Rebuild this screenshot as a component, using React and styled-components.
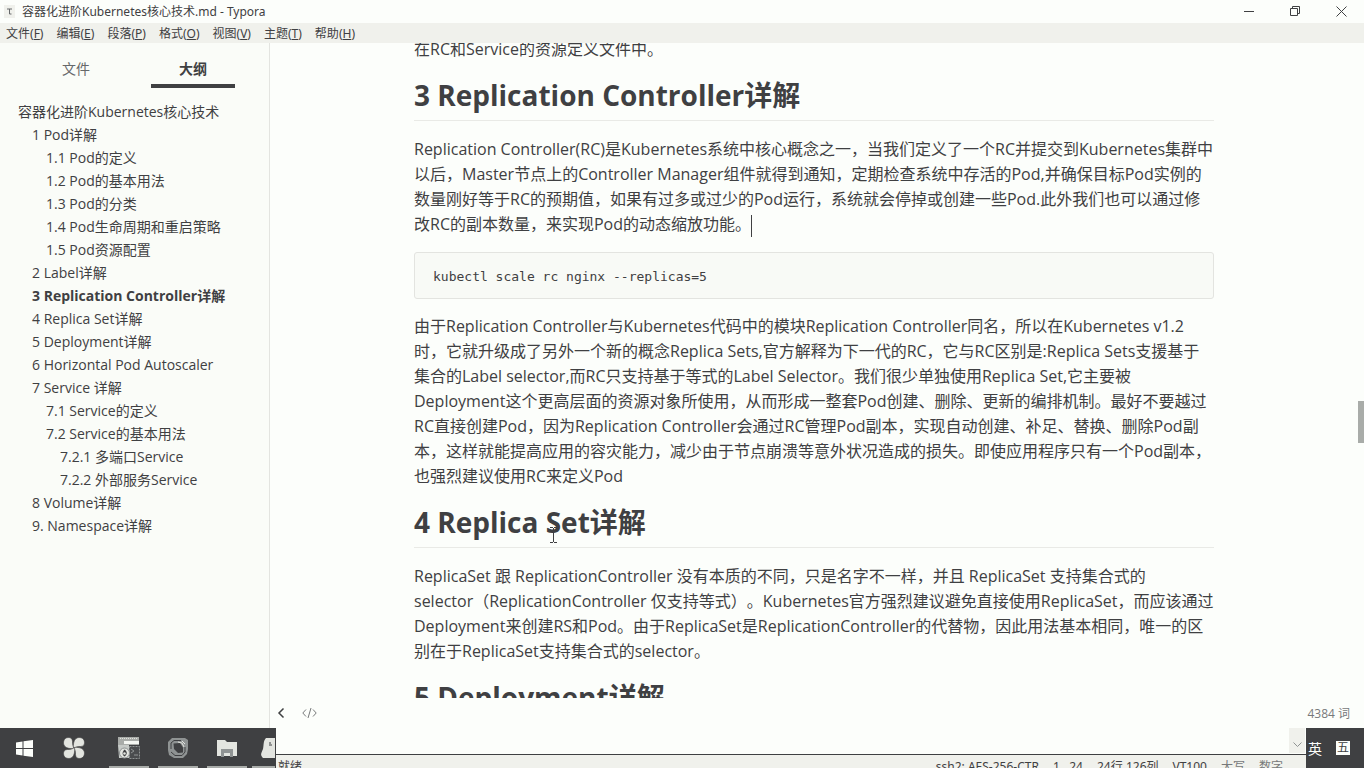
import React from 'react';
import styled, { createGlobalStyle } from 'styled-components';

const ink = '#3f4042';
const paper = '#fcfefb';
const haze = '#f0f1ec';
const uiFont = '"Noto Sans", "Noto Sans CJK SC", sans-serif';

const Global = createGlobalStyle`
  * { box-sizing: border-box; }
  body {
    margin: 0;
    background: ${paper};
    color: ${ink};
    font-family: "Open Sans", "Noto Sans CJK SC", sans-serif;
    text-spacing-trim: space-all;
  }
  button { font: inherit; color: inherit; background: none; border: 0; padding: 0; }
`;

const Desktop = styled.div`
  height: 100vh;
  display: flex;
  flex-direction: column;
  overflow: hidden;
`;

const TitleBar = styled.header`
  height: 23px;
  flex: none;
  display: flex;
  align-items: center;
  gap: 7px;
  padding-left: 4px;
  font-family: ${uiFont};
  font-size: 12px;
  line-height: 22px;
`;

const WindowControls = styled.div`
  margin-left: auto;
  display: flex;
`;

const WindowButton = styled.button`
  width: 46px;
  height: 22px;
  display: flex;
  align-items: center;
  justify-content: center;
`;

const MenuBar = styled.nav`
  height: 20px;
  flex: none;
  display: flex;
  gap: 13px;
  padding-left: 6px;
  background: ${haze};
  font-family: ${uiFont};
  font-size: 12px;
  line-height: 22px;
`;

const MenuItem = styled.button`
  white-space: nowrap;
`;

const Workspace = styled.div`
  flex: 1;
  min-height: 0;
  display: flex;
`;

const Sidebar = styled.aside`
  width: 270px;
  flex: none;
  background: #fafcf8;
  border-right: 1px solid #e3e4e0;
  font-size: 14px;
`;

const Tabs = styled.div`
  display: flex;
  gap: 33px;
  padding: 0 34px;
`;

const Tab = styled.button`
  width: 84px;
  height: 45px;
  padding-top: 10px;
  line-height: 31px;
  border-bottom: 4px solid ${p => (p.$active ? ink : 'transparent')};
  color: ${p => (p.$active ? ink : '#66686a')};
  font-weight: ${p => (p.$active ? 700 : 400)};
`;

const Outline = styled.ul`
  list-style: none;
  margin: 12px 0 0;
  padding: 0;
`;

const OutlineItem = styled.li`
  padding-left: ${p => 18 + p.$level * 14}px;
  line-height: 23px;
  white-space: nowrap;
  font-weight: ${p => (p.$current ? 700 : 400)};
`;

const OutlineLink = styled.a`
  display: block;
  height: 23px;
  color: inherit;
  text-decoration: none;
`;

const Main = styled.main`
  flex: 1;
  min-width: 0;
  display: flex;
  flex-direction: column;
`;

const Scroller = styled.div`
  flex: 1;
  min-height: 0;
  display: flex;
  overflow: hidden;
`;

const Page = styled.div`
  flex: 1;
  min-width: 0;
  height: 100%;
  overflow: hidden;
`;

const Article = styled.article`
  max-width: 800px;
  margin: -6px auto 0;
  font-size: 16px;
  line-height: 25px;
`;

const Paragraph = styled.p`
  margin: 0;
`;

const Unbroken = styled.span`
  white-space: nowrap;
`;

const Heading = styled.h2`
  margin: 16px 0;
  padding-bottom: 8px;
  border-bottom: 1px solid #e9eae6;
  font-size: 28px;
  font-weight: 700;
  line-height: 34px;
`;

const Caret = styled.span`
  display: inline-block;
  width: 1px;
  height: 22px;
  vertical-align: middle;
  background: ${ink};
`;

const CodeBlock = styled.pre`
  margin: 15px 0;
  padding: 12px 18px 10px;
  border: 1px solid #e3e4e0;
  border-radius: 3px;
  background: #f8faf6;
  font-family: "DejaVu Sans Mono", monospace;
  font-size: 13px;
  line-height: 23px;
`;

const ScrollTrack = styled.div`
  width: 6px;
  flex: none;
  padding-top: 358px;
`;

const ScrollThumb = styled.div`
  height: 42px;
  background: #a9aca9;
`;

const Footer = styled.footer`
  height: 30px;
  flex: none;
  display: flex;
  align-items: center;
  gap: 16px;
  padding: 0 14px 0 6px;
  font-size: 12px;
`;

const FooterButton = styled.button`
  display: flex;
`;

const WordCount = styled.span`
  margin-left: auto;
  color: #77797a;
`;

const BottomStrip = styled.div`
  height: 40px;
  flex: none;
  display: flex;
  background: ${ink};
`;

const Taskbar = styled.nav`
  width: 275px;
  flex: none;
  display: flex;
  overflow: hidden;
`;

const TaskButton = styled.button`
  width: 40px;
  height: 40px;
  flex: none;
  margin-left: ${p => p.$gap || 9}px;
  padding-top: 2px;
  display: flex;
  align-items: center;
  justify-content: center;
  border-bottom: 2px solid ${p => (p.$open ? '#a9aca9' : 'transparent')};
`;

const Terminal = styled.section`
  flex: 1;
  min-width: 0;
  display: flex;
  flex-direction: column;
  background: ${paper};
  border-left: 1px solid ${ink};
`;

const TerminalView = styled.div`
  height: 27px;
  flex: none;
  display: flex;
  justify-content: flex-end;
  padding-right: 1px;
  border-bottom: 1px solid ${ink};
`;

const TerminalScroll = styled.button`
  width: 16px;
  height: 25px;
  display: flex;
  align-items: flex-end;
  justify-content: center;
  padding-bottom: 5px;
  background: ${haze};
`;

const TerminalStatus = styled.div`
  height: 13px;
  display: flex;
  overflow: hidden;
  padding: 3px 23px 0 2px;
  background: ${haze};
  font-family: ${uiFont};
  font-size: 12px;
  line-height: 18px;
  white-space: pre;
`;

const StatusGroup = styled.div`
  margin-left: auto;
  display: flex;
  gap: 14px;
`;

const StatusMuted = styled.span`
  color: #77797a;
`;

const Tray = styled.div`
  width: 58px;
  flex: none;
  display: flex;
  align-items: center;
  gap: 14px;
  padding-left: 2px;
  color: ${paper};
  font-size: 14px;
`;

const ImeMode = styled.span`
  width: 14px;
  height: 14px;
  background: ${paper};
  color: ${ink};
  font-size: 12px;
  line-height: 14px;
  text-align: center;
`;

const Pointer = styled.svg`
  position: absolute;
  left: 135px;
  top: 24px;
`;

const Anchor = styled.span`
  position: relative;
`;

const menus = [['文件', 'F'], ['编辑', 'E'], ['段落', 'P'], ['格式', 'O'], ['视图', 'V'], ['主题', 'T'], ['帮助', 'H']];

const outline = [
  [0, '容器化进阶Kubernetes核心技术'],
  [1, '1 Pod详解'],
  [2, '1.1 Pod的定义'],
  [2, '1.2 Pod的基本用法'],
  [2, '1.3 Pod的分类'],
  [2, '1.4 Pod生命周期和重启策略'],
  [2, '1.5 Pod资源配置'],
  [1, '2 Label详解'],
  [1, '3 Replication Controller详解', true],
  [1, '4 Replica Set详解'],
  [1, '5 Deployment详解'],
  [1, '6 Horizontal Pod Autoscaler'],
  [1, '7 Service 详解'],
  [2, '7.1 Service的定义'],
  [2, '7.2 Service的基本用法'],
  [3, '7.2.1 多端口Service'],
  [3, '7.2.2 外部服务Service'],
  [1, '8 Volume详解'],
  [1, '9. Namespace详解'],
];

const WindowsLogo = () => (
  <svg width="17" height="17" viewBox="0 0 17 17" fill={paper}>
    <path d="M0 2.5 6.5 1.5V8H0zM7.5 1.3 17 0V8H7.500zM0 9H6.500V15.500L0 14.500zM7.500 9H17V17L7.500 15.700z" />
  </svg>
);

const petal = 'M11.500 11.500C8 12 3.500 11.500 1.500 9-.5 6 .5 1 5 .5c3-.3 4.500 1.500 4.500 4 0 2.500 0 4 2 7Z';

const PinwheelIcon = () => (
  <svg width="22" height="22" viewBox="0 0 22 22" fill="#e3e5e0">
    {[0, 90, 180, 270].map(turn => (
      <path key={turn} d={petal} transform={`rotate(${turn} 11 11)`} stroke={ink} strokeWidth=".6" />
    ))}
  </svg>
);

const TerminalIcon = () => (
  <svg width="24" height="24" viewBox="0 0 24 24">
    <path d="M1 1h21v8H1z" fill="#a9aca9" />
    <path d="M3 2.500h18" stroke="#e3e5e0" strokeDasharray="1 1" />
    <path d="M7 5h15v3H7z" fill="#f4f6f2" />
    <path d="M1 9h11v13H2z" fill="#c6cac7" />
    <path d="M12.500 10.500h10v12h-10z" fill="#4a4c4e" stroke="#8f9393" strokeDasharray="2 1" />
    <path d="m14 13 3 2-3 2M17 19h4" fill="none" stroke="#8f9393" />
    <circle cx="7.500" cy="17" r="5" fill="#e3e5e0" stroke="#8f9393" />
    <path d="M7.500 13.500c3 2 3 5 0 7-3-2-2-5 0-7Z" fill={ink} />
    <circle cx="7.500" cy="17.500" r="1.300" fill="#e3e5e0" />
  </svg>
);

const VmIcon = () => (
  <svg width="22" height="22" viewBox="0 0 22 22" fill="none">
    <path d="M5 1h13l3 2v9l-1 5-4 4H7l-5-3-1-5V5z" fill="#8f9393" />
    <path d="M6.500 6.500 13 6l3 4.500v5L11 16l-4-4z" fill={ink} />
    <path d="M4 12V6l3-2.500h7M18 10v5l-3 3.500H8L4 15" stroke={ink} />
    <path d="m11 5 4 1 2 4M15 4l3 3" stroke="#e3e5e0" />
  </svg>
);

const FolderIcon = () => (
  <svg width="22" height="20" viewBox="0 0 22 20">
    <path d="M1 2h8l2 2h10v14H1z" fill="#e3e5e0" />
    <path d="M5 19v-8h12v8h-3v-4H8v4z" fill="#8f9393" />
  </svg>
);

const FigureIcon = () => (
  <svg width="24" height="22" viewBox="0 0 24 22">
    <path d="M6 1C3 4 4 8 3 12c-2 5-3 6 0 9h20V1z" fill="#e3e5e0" />
    <path d="M9 8h3M10 5v2" stroke={ink} />
  </svg>
);

export default function App() {
  return (
    <Desktop lang="zh-CN">
      <Global />
      <TitleBar>
        <svg width="11" height="15" viewBox="0 0 11 15">
          <path d="M0 1h11v13H0z" fill={haze} />
          <path d="M3 5h5M5.500 5v5h2" fill="none" stroke="#66686a" />
        </svg>
        <span>容器化进阶Kubernetes核心技术.md - Typora</span>
        <WindowControls>
          <WindowButton aria-label="最小化">
            <svg width="11" height="11"><path d="M0 5.500h10" stroke={ink} /></svg>
          </WindowButton>
          <WindowButton aria-label="还原">
            <svg width="11" height="11" fill="none" stroke={ink}>
              <path d="M.5 2.500h7v7h-7zM2.500 2.500v-2h7v7h-2" />
            </svg>
          </WindowButton>
          <WindowButton aria-label="关闭">
            <svg width="11" height="11"><path d="m.5.5 10 10m0-10-10 10" stroke={ink} /></svg>
          </WindowButton>
        </WindowControls>
      </TitleBar>
      <MenuBar>
        {menus.map(([name, key]) => (
          <MenuItem key={key}>{name}(<u>{key}</u>)</MenuItem>
        ))}
      </MenuBar>
      <Workspace>
        <Sidebar>
          <Tabs>
            <Tab>文件</Tab>
            <Tab $active>大纲</Tab>
          </Tabs>
          <Outline>
            {outline.map(([level, text, current]) => (
              <OutlineItem key={text} $level={level} $current={current}>
                <OutlineLink href="#">{text}</OutlineLink>
              </OutlineItem>
            ))}
          </Outline>
        </Sidebar>
        <Main>
          <Scroller>
            <Page>
              <Article>
                <Paragraph>在RC和Service的资源定义文件中。</Paragraph>
                <Heading>3 Replication Controller详解</Heading>
                <Paragraph>
                  Replication Controller(RC)是Kubernetes系统中核心概念之一，当我们定义了一个RC并提交到Kubernetes集群中以后，Master节点上的Controller Manager组件就得到通知，定期检查系统中存活的Pod,并确保目标Pod实例的数量刚好等于RC的预期值，如果有过多或过少的Pod运行，系统就会停掉或创建一些Pod.此外我们也可以通过修改RC的副本数量，来实现Pod的动态缩放功能。<Caret />
                </Paragraph>
                <CodeBlock>kubectl scale rc nginx --replicas=5</CodeBlock>
                <Paragraph>
                  由于Replication Controller与Kubernetes代码中的模块Replication Controller同名，所以在Kubernetes v1.2时，它就升级成了另外一个新的概念Replica Sets,官方解释为下一代的RC，它与RC区别是:Replica Sets支援基于集合的Label selector,而RC只支持基于等式的Label Selector。我们很少单独使用Replica Set,它主要被Deployment这个更高层面的资源对象所使用，从而形成一整套Pod创建、删除、更新的编排机制。最好不要越过RC直接创建Pod，因为Replication Controller会通过RC管理Pod副本，实现自动创建、补足、替换、删除Pod副本，这样就能提高应用的容灾能力，减少由于节点崩溃等意外状况造成的损失。即使应用程序只有一个Pod副本，也强烈建议使用RC来定义Pod
                </Paragraph>
                <Heading>
                  <Anchor>
                    4 Replica Set详解
                    <Pointer width="9" height="16" viewBox="0 0 9 16" fill="none" stroke={ink}>
                      <path d="M1 .5h3M5 .5h3M4.500 1v14M1 15.500h3M5 15.500h3" />
                    </Pointer>
                  </Anchor>
                </Heading>
                <Paragraph>
                  ReplicaSet 跟 ReplicationController 没有本质的不同，只是名字不一样，并且 ReplicaSet 支持集合式的<Unbroken>selector（ReplicationController</Unbroken> 仅支持等式）。Kubernetes官方强烈建议避免直接使用ReplicaSet，而应该通过Deployment来创建RS和Pod。由于ReplicaSet是ReplicationController的代替物，因此用法基本相同，唯一的区别在于ReplicaSet支持集合式的selector。
                </Paragraph>
                <Heading>5 Deployment详解</Heading>
              </Article>
            </Page>
            <ScrollTrack><ScrollThumb /></ScrollTrack>
          </Scroller>
          <Footer>
            <FooterButton aria-label="侧边栏">
              <svg width="10" height="12" fill="none" stroke={ink} strokeWidth="1.500"><path d="M7.500 1.500 3 6l4.500 4.500" /></svg>
            </FooterButton>
            <FooterButton aria-label="源代码模式">
              <svg width="15" height="12" fill="none" stroke="#77797a"><path d="M4 2.500.8 6 4 9.500M11 2.500 14.200 6 11 9.500M9 1 6 11" /></svg>
            </FooterButton>
            <WordCount>4384 词</WordCount>
          </Footer>
        </Main>
      </Workspace>
      <BottomStrip>
        <Taskbar>
          <TaskButton $gap={4} aria-label="开始"><WindowsLogo /></TaskButton>
          <TaskButton $gap={10} aria-label="浏览器"><PinwheelIcon /></TaskButton>
          <TaskButton $gap={15} $open aria-label="终端"><TerminalIcon /></TaskButton>
          <TaskButton $open aria-label="虚拟机"><VmIcon /></TaskButton>
          <TaskButton $open aria-label="文件夹"><FolderIcon /></TaskButton>
          <TaskButton $gap={5} $open aria-label="聊天"><FigureIcon /></TaskButton>
        </Taskbar>
        <Terminal>
          <TerminalView>
            <TerminalScroll aria-label="向下滚动">
              <svg width="9" height="6" fill="none" stroke="#8f9393"><path d="m.5.5 4 4 4-4" /></svg>
            </TerminalScroll>
          </TerminalView>
          <TerminalStatus>
            <span>就绪</span>
            <StatusGroup>
              <span>ssh2: AES-256-CTR</span>
              <span>1,  24</span>
              <span>24行,126列</span>
              <span>VT100</span>
              <StatusMuted>大写</StatusMuted>
              <StatusMuted>数字</StatusMuted>
            </StatusGroup>
          </TerminalStatus>
        </Terminal>
        <Tray>
          <span>英</span>
          <ImeMode>五</ImeMode>
        </Tray>
      </BottomStrip>
    </Desktop>
  );
}
